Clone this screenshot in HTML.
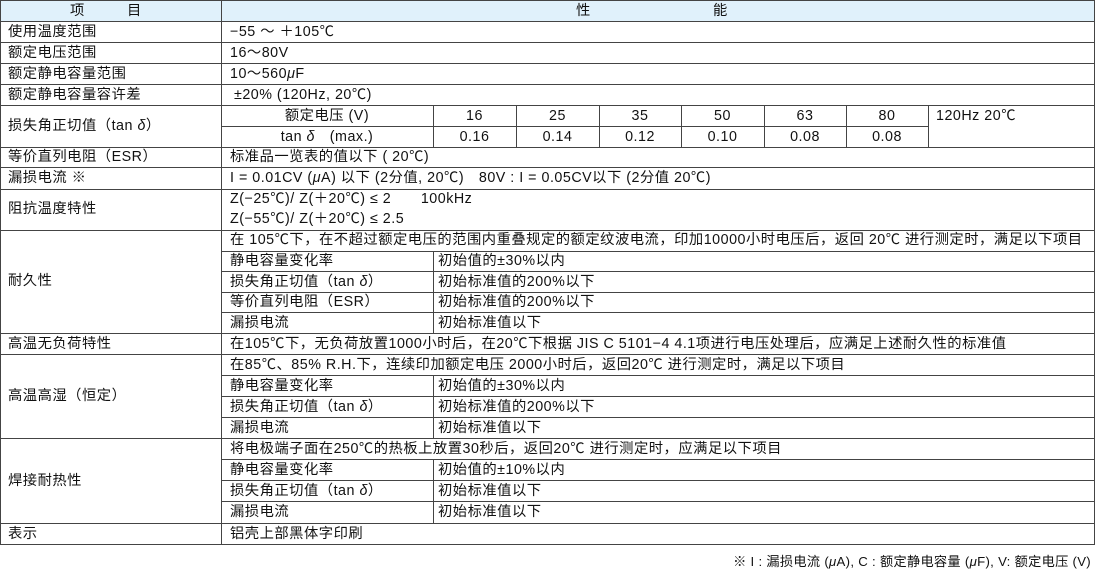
<!DOCTYPE html>
<html><head><meta charset="utf-8"><style>
body{margin:0;width:1095px;height:574px;background:#fff;position:relative;overflow:hidden;font-family:"Liberation Sans","Noto Sans CJK SC",sans-serif;font-size:14.3px;letter-spacing:0.5px;color:#111}
.h{position:absolute;height:1px;background:#444}
.v{position:absolute;width:1px;background:#444}
.t{position:absolute;white-space:nowrap;line-height:20px}
.c{text-align:center}
</style></head><body>
<div style="position:absolute;left:0;top:0;width:1095px;height:21px;background:#e0f1fb"></div>
<div class="h" style="left:0;width:1095px;top:0"></div>
<div class="h" style="left:0;width:1095px;top:21px"></div>
<div class="h" style="left:0;width:1095px;top:42px"></div>
<div class="h" style="left:0;width:1095px;top:63px"></div>
<div class="h" style="left:0;width:1095px;top:84px"></div>
<div class="h" style="left:0;width:1095px;top:105px"></div>
<div class="h" style="left:0;width:1095px;top:147px"></div>
<div class="h" style="left:0;width:1095px;top:167px"></div>
<div class="h" style="left:0;width:1095px;top:189px"></div>
<div class="h" style="left:0;width:1095px;top:230px"></div>
<div class="h" style="left:0;width:1095px;top:333px"></div>
<div class="h" style="left:0;width:1095px;top:354px"></div>
<div class="h" style="left:0;width:1095px;top:438px"></div>
<div class="h" style="left:0;width:1095px;top:523px"></div>
<div class="h" style="left:0;width:1095px;top:544px"></div>
<div class="h" style="left:221px;width:707px;top:126px"></div>
<div class="h" style="left:221px;width:874px;top:251px"></div>
<div class="h" style="left:221px;width:874px;top:271px"></div>
<div class="h" style="left:221px;width:874px;top:292px"></div>
<div class="h" style="left:221px;width:874px;top:312px"></div>
<div class="h" style="left:221px;width:874px;top:375px"></div>
<div class="h" style="left:221px;width:874px;top:396px"></div>
<div class="h" style="left:221px;width:874px;top:417px"></div>
<div class="h" style="left:221px;width:874px;top:459px"></div>
<div class="h" style="left:221px;width:874px;top:480px"></div>
<div class="h" style="left:221px;width:874px;top:501px"></div>
<div class="v" style="left:0;top:0;height:545px"></div>
<div class="v" style="left:1094px;top:0;height:545px"></div>
<div class="v" style="left:221px;top:0;height:545px"></div>
<div class="v" style="left:433px;top:105px;height:42px"></div>
<div class="v" style="left:516px;top:105px;height:42px"></div>
<div class="v" style="left:599px;top:105px;height:42px"></div>
<div class="v" style="left:681px;top:105px;height:42px"></div>
<div class="v" style="left:764px;top:105px;height:42px"></div>
<div class="v" style="left:846px;top:105px;height:42px"></div>
<div class="v" style="left:928px;top:105px;height:42px"></div>
<div class="v" style="left:433px;top:251px;height:82px"></div>
<div class="v" style="left:433px;top:375px;height:63px"></div>
<div class="v" style="left:433px;top:459px;height:64px"></div>

<div class="t" style="left:70px;top:1px">项</div>
<div class="t" style="left:127px;top:1px">目</div>
<div class="t" style="left:576px;top:1px">性</div>
<div class="t" style="left:713px;top:1px">能</div>

<div class="t" style="left:8px;top:22px">使用温度范围</div>
<div class="t" style="left:8px;top:43px">额定电压范围</div>
<div class="t" style="left:8px;top:64px">额定静电容量范围</div>
<div class="t" style="left:8px;top:85px">额定静电容量容许差</div>
<div class="t" style="left:8px;top:116px">损失角正切值（tan <i>δ</i>）</div>
<div class="t" style="left:8px;top:147px">等价直列电阻（ESR）</div>
<div class="t" style="left:8px;top:168px">漏损电流 ※</div>
<div class="t" style="left:8px;top:199px">阻抗温度特性</div>
<div class="t" style="left:8px;top:271px">耐久性</div>
<div class="t" style="left:8px;top:334px">高温无负荷特性</div>
<div class="t" style="left:8px;top:386px">高温高湿（恒定）</div>
<div class="t" style="left:8px;top:471px">焊接耐热性</div>
<div class="t" style="left:8px;top:524px">表示</div>

<div class="t" style="left:230px;top:22px">−55 ～ ＋105℃</div>
<div class="t" style="left:230px;top:43px">16～80V</div>
<div class="t" style="left:230px;top:64px">10～560<i>μ</i>F</div>
<div class="t" style="left:234px;top:85px">±20% (120Hz, 20℃)</div>
<div class="t c" style="left:221px;width:212px;top:106px">额定电压 (V)</div>
<div class="t c" style="left:221px;width:212px;top:127px">tan <i>δ</i>　(max.)</div>
<div class="t c" style="left:433px;width:83px;top:106px">16</div>
<div class="t c" style="left:516px;width:83px;top:106px">25</div>
<div class="t c" style="left:599px;width:82px;top:106px">35</div>
<div class="t c" style="left:681px;width:83px;top:106px">50</div>
<div class="t c" style="left:764px;width:82px;top:106px">63</div>
<div class="t c" style="left:846px;width:82px;top:106px">80</div>
<div class="t c" style="left:433px;width:83px;top:127px">0.16</div>
<div class="t c" style="left:516px;width:83px;top:127px">0.14</div>
<div class="t c" style="left:599px;width:82px;top:127px">0.12</div>
<div class="t c" style="left:681px;width:83px;top:127px">0.10</div>
<div class="t c" style="left:764px;width:82px;top:127px">0.08</div>
<div class="t c" style="left:846px;width:82px;top:127px">0.08</div>
<div class="t" style="left:936px;top:106px">120Hz 20℃</div>
<div class="t" style="left:230px;top:147px">标准品一览表的值以下 ( 20℃)</div>
<div class="t" style="left:230px;top:168px">I = 0.01CV (<i>μ</i>A) 以下 (2分值, 20℃)　80V : I = 0.05CV以下 (2分值  20℃)</div>
<div class="t" style="left:230px;top:189px">Z(−25℃)/ Z(＋20℃) ≤ 2　　100kHz</div>
<div class="t" style="left:230px;top:209px">Z(−55℃)/ Z(＋20℃) ≤ 2.5</div>
<div class="t" style="left:230px;top:230px">在 105℃下，在不超过额定电压的范围内重叠规定的额定纹波电流，印加10000小时电压后，返回 20℃ 进行测定时，满足以下项目</div>
<div class="t" style="left:230px;top:251px">静电容量变化率</div>
<div class="t" style="left:230px;top:272px">损失角正切值（tan <i>δ</i>）</div>
<div class="t" style="left:230px;top:292px">等价直列电阻（ESR）</div>
<div class="t" style="left:230px;top:313px">漏损电流</div>
<div class="t" style="left:438px;top:251px">初始值的±30%以内</div>
<div class="t" style="left:438px;top:272px">初始标准值的200%以下</div>
<div class="t" style="left:438px;top:292px">初始标准值的200%以下</div>
<div class="t" style="left:438px;top:313px">初始标准值以下</div>
<div class="t" style="left:230px;top:334px">在105℃下，无负荷放置1000小时后，在20℃下根据 JIS C 5101−4 4.1项进行电压处理后，应满足上述耐久性的标准值</div>
<div class="t" style="left:230px;top:355px">在85℃、85% R.H.下，连续印加额定电压 2000小时后，返回20℃ 进行测定时，满足以下项目</div>
<div class="t" style="left:230px;top:376px">静电容量变化率</div>
<div class="t" style="left:230px;top:397px">损失角正切值（tan <i>δ</i>）</div>
<div class="t" style="left:230px;top:418px">漏损电流</div>
<div class="t" style="left:438px;top:376px">初始值的±30%以内</div>
<div class="t" style="left:438px;top:397px">初始标准值的200%以下</div>
<div class="t" style="left:438px;top:418px">初始标准值以下</div>
<div class="t" style="left:230px;top:439px">将电极端子面在250℃的热板上放置30秒后，返回20℃ 进行测定时，应满足以下项目</div>
<div class="t" style="left:230px;top:460px">静电容量变化率</div>
<div class="t" style="left:230px;top:481px">损失角正切值（tan <i>δ</i>）</div>
<div class="t" style="left:230px;top:502px">漏损电流</div>
<div class="t" style="left:438px;top:460px">初始值的±10%以内</div>
<div class="t" style="left:438px;top:481px">初始标准值以下</div>
<div class="t" style="left:438px;top:502px">初始标准值以下</div>
<div class="t" style="left:230px;top:524px">铝壳上部黑体字印刷</div>

<div class="t" style="right:4px;top:552px;font-size:13.2px;letter-spacing:0.3px">※ I : 漏损电流 (<i>μ</i>A), C : 额定静电容量 (<i>μ</i>F), V: 额定电压 (V)</div>
</body></html>
